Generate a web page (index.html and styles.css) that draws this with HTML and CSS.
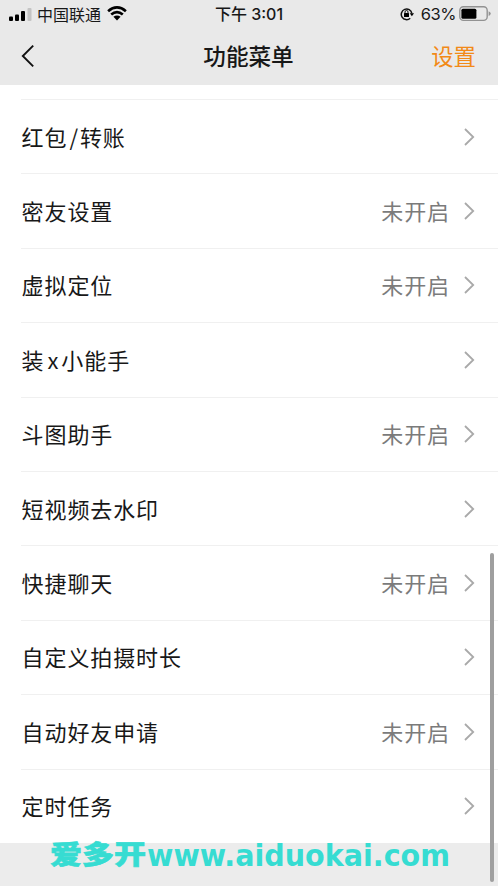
FILE: index.html
```html
<!DOCTYPE html>
<html lang="zh-CN">
<head>
<meta charset="utf-8">
<title>功能菜单</title>
<link rel="stylesheet" href="styles.css">
</head>
<body>
<div class="screen">
  <header class="header">
    <div class="status">
      <div class="status-left">
        <svg class="signal" width="23" height="13" viewBox="0 0 23 13"><rect x="0" y="8.5" width="4" height="4.5" rx="1"/><rect x="6" y="6.5" width="4" height="6.5" rx="1"/><rect x="12" y="3" width="4" height="10" rx="1"/><rect x="18.5" y="0" width="4" height="13" rx="1" fill="#c4c4c4"/></svg>
        <span class="carrier">中国联通</span>
        <svg class="wifi" width="20" height="15" viewBox="0 0 20 15"><g fill="none" stroke="#000" stroke-width="2.7"><path d="M1.1 5.2Q10-2.4 18.9 5.2"/><path d="M4.2 8.5Q10 3.6 15.8 8.5"/></g><path d="M6.4 10.8Q10 8 13.6 10.8L10 14.6Z"/></svg>
      </div>
      <span class="time">下午 3:01</span>
      <div class="status-right">
        <svg class="lock" width="14" height="14" viewBox="0 0 14 14"><path d="M10.2 11.2A5.3 5.3 0 1 1 11.8 6.4" fill="none" stroke="#111" stroke-width="1.5"/><path d="M9.7 6.2H14L11.9 9.2Z"/><rect x="4" y="6" width="5" height="4" rx=".5"/><path d="M5 6.5V5a1.5 1.5 0 0 1 3 0v1.5" fill="none" stroke="#111"/></svg>
        <span class="percent">63%</span>
        <svg class="battery" width="32" height="16" viewBox="0 0 32 16"><rect x=".8" y=".8" width="27.4" height="13.6" rx="3.6" fill="none" stroke="#929292" stroke-width="1.4"/><rect x="2.4" y="2.7" width="15" height="10" rx="1.5"/><path d="M29.6 5.2Q31.7 6 31.7 7.6T29.6 10Z" fill="#929292"/></svg>
      </div>
    </div>
    <nav class="nav">
      <svg class="back" width="14" height="24" viewBox="0 0 14 24"><path d="M12.2 1.6 1.8 12l10.4 10.4" fill="none" stroke="#111" stroke-width="1.9"/></svg>
      <h1 class="title">功能菜单</h1>
      <span class="settings">设置</span>
    </nav>
  </header>
  <main class="list">
    <div class="row"><span class="label">红包<span class="slash">/</span>转账</span><svg class="chevron" viewBox="0 0 11 18"><path d="m1 1 8.2 8L1 17"/></svg></div>
    <div class="row"><span class="label">密友设置</span><span class="state">未开启</span><svg class="chevron" viewBox="0 0 11 18"><path d="m1 1 8.2 8L1 17"/></svg></div>
    <div class="row"><span class="label">虚拟定位</span><span class="state">未开启</span><svg class="chevron" viewBox="0 0 11 18"><path d="m1 1 8.2 8L1 17"/></svg></div>
    <div class="row"><span class="label">装<span class="latin">x</span>小能手</span><svg class="chevron" viewBox="0 0 11 18"><path d="m1 1 8.2 8L1 17"/></svg></div>
    <div class="row"><span class="label">斗图助手</span><span class="state">未开启</span><svg class="chevron" viewBox="0 0 11 18"><path d="m1 1 8.2 8L1 17"/></svg></div>
    <div class="row"><span class="label">短视频去水印</span><svg class="chevron" viewBox="0 0 11 18"><path d="m1 1 8.2 8L1 17"/></svg></div>
    <div class="row"><span class="label">快捷聊天</span><span class="state">未开启</span><svg class="chevron" viewBox="0 0 11 18"><path d="m1 1 8.2 8L1 17"/></svg></div>
    <div class="row"><span class="label">自定义拍摄时长</span><svg class="chevron" viewBox="0 0 11 18"><path d="m1 1 8.2 8L1 17"/></svg></div>
    <div class="row"><span class="label">自动好友申请</span><span class="state">未开启</span><svg class="chevron" viewBox="0 0 11 18"><path d="m1 1 8.2 8L1 17"/></svg></div>
    <div class="row"><span class="label">定时任务</span><svg class="chevron" viewBox="0 0 11 18"><path d="m1 1 8.2 8L1 17"/></svg></div>
  </main>
  <div class="scrollbar"></div>
  <svg class="watermark" width="498" height="66" viewBox="0 0 498 66">
    <text class="mark-cjk" x="50" y="43.5" textLength="96" lengthAdjust="spacingAndGlyphs">爱多开</text>
    <text class="mark-latin" x="147" y="45.5" textLength="303" lengthAdjust="spacingAndGlyphs">www.aiduokai.com</text>
  </svg>
</div>
</body>
</html>
```
FILE: styles.css
```css
* { box-sizing: border-box; }
body {
  margin: 0;
  font-family: "Noto Sans CJK SC", sans-serif;
  color: #181818;
}
.screen {
  position: relative;
  width: 498px;
  height: 886px;
  overflow: hidden;
  background: #ececec;
}
.header { height: 85px; background: #e9e9e9; }
.status {
  display: grid;
  grid-template-columns: 1fr auto 1fr;
  align-items: center;
  height: 28px;
  padding: 0 7px 0 9px;
  line-height: 28px;
  font-size: 16px;
}
.status-left, .status-right { display: flex; align-items: center; height: 28px; }
.status-right { justify-content: flex-end; }
.carrier { margin: 0 6px 0 5px; line-height: 27px; }
.wifi { margin-top: -2px; }
.time {
  margin-left: -2px;
  font-family: Inter, "Noto Sans CJK SC", sans-serif;
  font-weight: 500;
}
.lock { margin-right: 7px; }
.percent {
  margin-right: 3px;
  font-family: Inter, sans-serif;
  font-size: 16.5px;
  letter-spacing: -.5px;
}
.nav {
  display: grid;
  grid-template-columns: 1fr auto 1fr;
  align-items: center;
  height: 55px;
  padding: 0 22px 0 21px;
}
.title { margin: 0; font-size: 22.6px; font-weight: 500; line-height: 55px; }
.settings { justify-self: end; color: #f28a18; font-size: 22.4px; line-height: 55px; }
.list { height: 758px; padding: 14px 0 0 21px; background: #fff; }
.row {
  display: flex;
  align-items: center;
  height: 74.4px;
  padding-right: 23px;
  border-top: 1px solid #f0f0f0;
  font-size: 22px;
  line-height: 34px;
  letter-spacing: .9px;
}
.label { flex: 1; padding: 0 0 2px .6px; }
.slash { margin: 0 1px 0 2px; }
.latin { margin: 0 2px 0 3px; }
.state { margin-right: 14px; padding-bottom: 2px; color: #7b7b7b; }
.chevron { width: 11px; height: 18px; fill: none; stroke: #a9a9a9; stroke-width: 1.8; }
.scrollbar {
  position: absolute;
  top: 553px;
  right: 4px;
  width: 4px;
  height: 329px;
  border-radius: 2px;
  background: #9f9f9f;
}
.watermark { position: absolute; left: 0; top: 820px; fill: #36dcd2; }
.mark-cjk {
  font-family: "Noto Sans CJK SC", sans-serif;
  font-size: 26.5px;
  font-weight: 900;
  stroke: #36dcd2;
  stroke-width: .6px;
}
.mark-latin {
  font-family: "DejaVu Sans", sans-serif;
  font-size: 30px;
  font-weight: 700;
}
```
